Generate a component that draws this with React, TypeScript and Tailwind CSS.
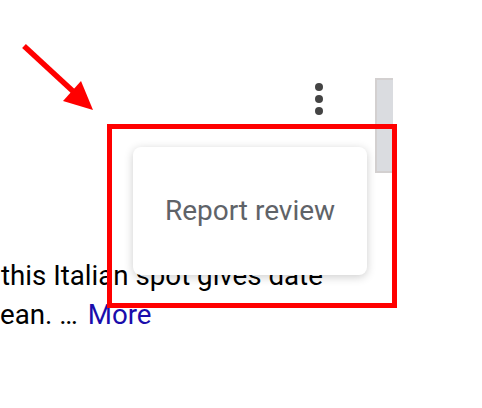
export default function App() {
  return (
    <div className="relative w-[482px] h-[408px] overflow-hidden bg-white pt-[78px] font-['Roboto',sans-serif]">
      {/* kebab menu + scrollbar thumb */}
      <div className="flex justify-end items-start gap-[52px] pr-[89px]">
        <div className="flex flex-col gap-1 pt-[5px]">
          <span className="w-2 h-2 rounded-full bg-[#444444]" />
          <span className="w-2 h-2 rounded-full bg-[#444444]" />
          <span className="w-2 h-2 rounded-full bg-[#444444]" />
        </div>
        <div className="w-[18px] h-[95px] bg-[#dadce0] border-2 border-r-0 border-[#d3d0d0]" />
      </div>

      {/* review text behind the popup */}
      <div className="pt-[83px] text-[27.7px] leading-[39px] text-black whitespace-nowrap">
        <p className="pl-px">this Italian spot gives date</p>
        <p>
          ean. …<a className="ml-[10px] text-[#1a0dab]">More</a>
        </p>
      </div>

      {/* popup */}
      <div className="absolute left-[133px] top-[147px] w-[234px] h-[128px] flex items-center justify-center rounded-lg bg-white shadow-[0_2px_10px_rgba(0,0,0,0.2)] text-[28px] text-[#5f6368]">
        Report review
      </div>

      {/* annotation */}
      <div className="absolute left-[107px] top-[124px] w-[290px] h-[184px] border-[5.5px] border-[#ff0000]" />
      <svg className="absolute left-0 top-0" width="120" height="130" viewBox="0 0 120 130">
        <line x1="24" y1="46" x2="76" y2="94" stroke="#ff0000" strokeWidth="5.5" />
        <polygon points="81,81 63,101 93,110" fill="#ff0000" />
      </svg>
    </div>
  );
}
